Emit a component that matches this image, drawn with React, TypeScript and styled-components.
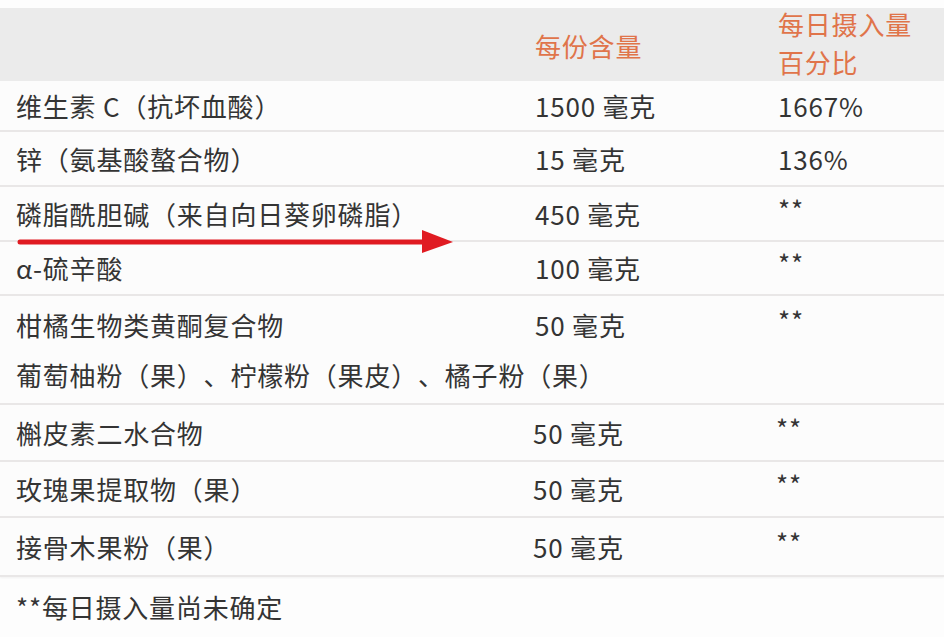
import React from "react";
import styled, { createGlobalStyle } from "styled-components";

const GlobalStyle = createGlobalStyle`
  html, body {
    margin: 0;
    padding: 0;
    background: #ffffff;
  }
  body {
    font-family: "Noto Sans CJK SC", "Noto Sans", sans-serif;
    color: #343434;
    text-spacing-trim: space-all;
  }
`;

const Page = styled.div`
  position: relative;
  width: 944px;
  height: 637px;
  overflow: hidden;
  padding-top: 8px;
  box-sizing: border-box;
  background: #fdfdfd;
  letter-spacing: 0.8px;
`;

const Header = styled.div`
  display: grid;
  grid-template-columns: 519px 243px 1fr;
  align-items: center;
  height: 73px;
  padding-left: 16px;
  padding-bottom: 8px;
  box-sizing: border-box;
  background: #ebebeb;
  color: #e0744a;
  font-size: 26px;
`;

const HeadCell = styled.div`
  line-height: 38px;
`;

const HeadStack = styled(HeadCell)`
  transform: translateY(-3px);
`;

const Row = styled.div<{ $h: number }>`
  display: grid;
  grid-template-columns: 519px 243px 1fr;
  align-items: center;
  height: ${(p) => p.$h}px;
  padding-left: 16px;
  box-sizing: border-box;
  font-size: 26px;
  line-height: 1.2;
  background: #fcfcfc;
  border-bottom: 2px solid #e9e7e7;
  box-shadow: 0 1px 2px rgba(0, 0, 0, 0.05);
`;

const Cell = styled.div<{ $shift?: number }>`
  white-space: nowrap;
  margin-left: ${(p) => p.$shift ?? 0}px;
`;

const Stars = styled.div<{ $shift?: number }>`
  margin-left: ${(p) => p.$shift ?? 0}px;
  transform: translateY(-5px);
`;

const GroupRow = styled(Row)`
  grid-template-rows: 50px 50px;
  align-content: start;
  padding-top: 4px;
`;

const SubLine = styled.div`
  grid-column: 1 / -1;
  white-space: nowrap;
`;

const Footer = styled.div`
  padding: 14px 0 0 16px;
  font-size: 26px;
  line-height: 1.2;
`;

const Arrow = styled.svg`
  position: absolute;
  left: 16px;
  top: 228px;
`;

type Item = { name: string; amount: string; dv: string; h: number; shift?: number };

const top: Item[] = [
  { name: "维生素 C（抗坏血酸）", amount: "1500 毫克", dv: "1667%", h: 51 },
  { name: "锌（氨基酸螯合物）", amount: "15 毫克", dv: "136%", h: 55 },
  { name: "磷脂酰胆碱（来自向日葵卵磷脂）", amount: "450 毫克", dv: "**", h: 55 },
  { name: "α-硫辛酸", amount: "100 毫克", dv: "**", h: 54 },
];

const bottom: Item[] = [
  { name: "槲皮素二水合物", amount: "50 毫克", dv: "**", h: 57, shift: -2 },
  { name: "玫瑰果提取物（果）", amount: "50 毫克", dv: "**", h: 56, shift: -2 },
  { name: "接骨木果粉（果）", amount: "50 毫克", dv: "**", h: 59, shift: -2 },
];

const renderRow = (it: Item) => (
  <Row key={it.name} $h={it.h}>
    <Cell>{it.name}</Cell>
    <Cell $shift={it.shift}>{it.amount}</Cell>
    {it.dv === "**" ? (
      <Stars $shift={it.shift}>**</Stars>
    ) : (
      <Cell $shift={it.shift}>{it.dv}</Cell>
    )}
  </Row>
);

const App = () => (
  <>
    <GlobalStyle />
    <Page>
      <Header>
        <div />
        <HeadCell>每份含量</HeadCell>
        <HeadStack>
          每日摄入量
          <br />
          百分比
        </HeadStack>
      </Header>
      {top.map(renderRow)}
      <GroupRow $h={109}>
        <Cell>柑橘生物类黄酮复合物</Cell>
        <Cell>50 毫克</Cell>
        <Stars>**</Stars>
        <SubLine>葡萄柚粉（果）、柠檬粉（果皮）、橘子粉（果）</SubLine>
      </GroupRow>
      {bottom.map(renderRow)}
      <Footer>**每日摄入量尚未确定</Footer>
      <Arrow width="440" height="28" viewBox="0 0 440 28">
        <line x1="4" y1="14" x2="410" y2="14" stroke="#e01b22" strokeWidth="5" strokeLinecap="round" />
        <polygon points="406,2 437,14 406,25" fill="#e01b22" />
      </Arrow>
    </Page>
  </>
);

export default App;
